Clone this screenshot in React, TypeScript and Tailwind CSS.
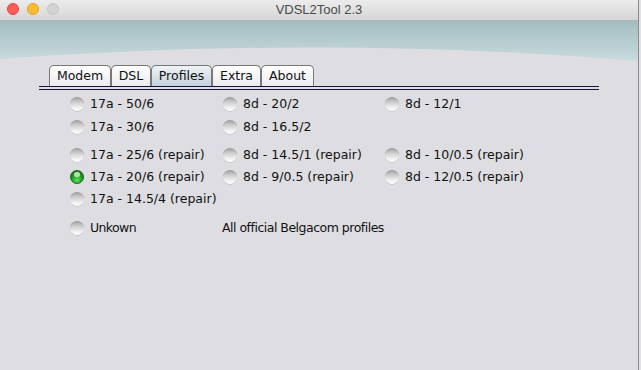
import React from "react"

type Profile = { label: string; selected?: boolean } | null

const font = "font-['DejaVu_Sans',sans-serif]"

// rows of the profiles grid, null = empty cell
const groups: { mt: string; rows: Profile[][] }[] = [
	{
		mt: "mt-0",
		rows: [
			[{ label: "17a - 50/6" }, { label: "8d - 20/2" }, { label: "8d - 12/1" }],
			[{ label: "17a - 30/6" }, { label: "8d - 16.5/2" }, null],
		],
	},
	{
		mt: "mt-[6px]",
		rows: [
			[{ label: "17a - 25/6 (repair)" }, { label: "8d - 14.5/1 (repair)" }, { label: "8d - 10/0.5 (repair)" }],
			[{ label: "17a - 20/6 (repair)", selected: true }, { label: "8d - 9/0.5 (repair)" }, { label: "8d - 12/0.5 (repair)" }],
			[{ label: "17a - 14.5/4 (repair)" }, null, null],
		],
	},
]

const tabs = [
	{ name: "Modem", w: "w-[62px]" },
	{ name: "DSL", w: "w-[40px]" },
	{ name: "Profiles", w: "w-[61px]", active: true },
	{ name: "Extra", w: "w-[49px]" },
	{ name: "About", w: "w-[53px]" },
]

const Radio = ({ on }: { on?: boolean }) =>
	on ? (
		<span className="relative block h-[14px] w-[14px] shrink-0 rounded-full border border-[#1d5f1d] bg-[radial-gradient(circle_at_50%_75%,#5fe05f_0%,#1fa11f_45%,#0b6a0b_100%)]">
			<span className="absolute left-[3px] top-[1px] h-[5px] w-[6px] rounded-full bg-[#d8f5d8] opacity-80" />
		</span>
	) : (
		<span className="block h-[14px] w-[14px] shrink-0 rounded-full border-t border-[#9c9c9c] bg-[linear-gradient(to_bottom,#a9a9a9_0%,#d0d0d0_35%,#f2f2f2_75%,#ffffff_100%)] shadow-[0_0.5px_0.5px_rgba(0,0,0,0.25)]" />
	)

const Cell = ({ p, w, tight }: { p: Profile; w: string; tight?: boolean }) => (
	<div className={`flex items-center gap-[6px] ${w}`}>
		{p && (
			<>
				<Radio on={p.selected} />
				<span className={`whitespace-nowrap ${tight ? "tracking-[-0.6px]" : ""}`}>{p.label}</span>
			</>
		)}
	</div>
)

export default function App() {
	return (
		<div className={`flex h-[370px] w-[641px] bg-[#dedee2] ${font}`}>
			<div className="flex w-[638px] flex-col">
				{/* title bar */}
				<div className="relative flex h-[21px] items-center justify-center border-b border-[#b3b3b3] bg-[linear-gradient(to_bottom,#ececec,#d6d6d6)]">
					<div className="absolute left-[7px] top-[3px] flex gap-[8px]">
						<span className="h-[12px] w-[12px] rounded-full border border-[#e1453f] bg-[#fc5e57]" />
						<span className="h-[12px] w-[12px] rounded-full border border-[#dea234] bg-[#fdbc2f]" />
						<span className="h-[12px] w-[12px] rounded-full border border-[#c4c4c4] bg-[#d3d3d3]" />
					</div>
					<span className="font-['Liberation_Sans',sans-serif] text-[13px] text-[#4a4a4a]">VDSL2Tool 2.3</span>
				</div>

				{/* header wave */}
				<svg width="638" height="44" className="block">
					<defs>
						<linearGradient id="hdr" x1="0" y1="0" x2="0" y2="1">
							<stop offset="0" stopColor="#a2bdc0" />
							<stop offset="1" stopColor="#c9dbdf" />
						</linearGradient>
					</defs>
					<path d="M0 0 H638 V40 Q330 14 0 38 Z" fill="url(#hdr)" />
				</svg>

				{/* tabs */}
				<div className="ml-[39px] w-[560px]">
					<div className="ml-[10px] flex h-[21px]">
						{tabs.map((t) => (
							<div
								key={t.name}
								className={`flex items-center justify-center rounded-t-[5px] border border-b-0 border-[#787878] pt-[1px] text-[12.5px] text-[#111] ${t.w} ${
									t.active
										? "bg-[linear-gradient(to_bottom,#f0f3f6,#c3d1dd)]"
										: "bg-[linear-gradient(to_bottom,#fefefe,#ececef)]"
								}`}
							>
								{t.name}
							</div>
						))}
					</div>
					<div className="h-[1px] bg-[#16163a]" />
					<div className="h-[2px]" />
					<div className="h-[1px] bg-[#16163a]" />
				</div>

				{/* profiles */}
				<div className="ml-[70px] mt-[3px] flex flex-col text-[12.5px] text-[#111]">
					{groups.map((g, gi) => (
						<div key={gi} className={`flex flex-col gap-[1px] ${g.mt}`}>
							{g.rows.map((r, ri) => (
								<div key={ri} className={`flex h-[22px] ${gi === 1 && ri > 0 ? "-mt-[1px]" : ""}`}>
									<Cell p={r[0]} w="w-[153px]" />
									<Cell p={r[1]} w="w-[162px]" />
									<Cell p={r[2]} w="w-[200px]" />
								</div>
							))}
						</div>
					))}
					<div className="mt-[7px] flex h-[22px] items-center">
						<Cell p={{ label: "Unkown" }} w="w-[152px]" tight />
						<span className="tracking-[-0.5px]">All official Belgacom profiles</span>
					</div>
				</div>
			</div>
			<div className="w-[1px] bg-[#8a8a8a]" />
			<div className="w-[2px] bg-[#e2e2e4]" />
		</div>
	)
}
